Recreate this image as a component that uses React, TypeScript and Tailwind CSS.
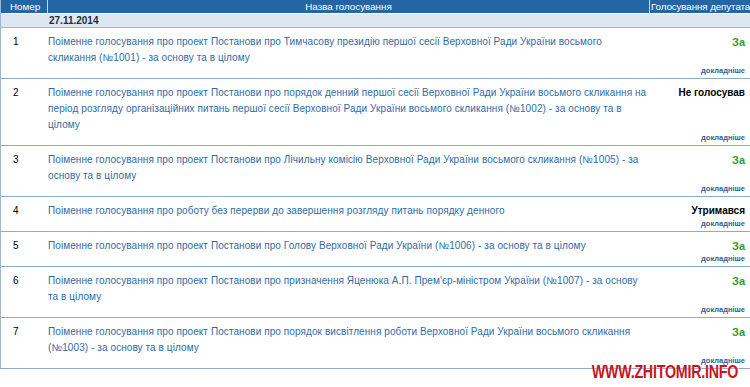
const votes = [
  {
    n: 1,
    title:
      'Поіменне голосування про проект Постанови про Тимчасову президію першої сесії Верховної Ради України восьмого скликання (№1001) - за основу та в цілому',
    vote: 'За',
  },
  {
    n: 2,
    title:
      'Поіменне голосування про проект Постанови про порядок денний першої сесії Верховної Ради України восьмого скликання на період розгляду організаційних питань першої сесії Верховної Ради України восьмого скликання (№1002) - за основу та в цілому',
    vote: 'Не голосував',
  },
  {
    n: 3,
    title:
      'Поіменне голосування про проект Постанови про Лічильну комісію Верховної Ради України восьмого скликання (№1005) - за основу та в цілому',
    vote: 'За',
  },
  {
    n: 4,
    title: 'Поіменне голосування про роботу без перерви до завершення розгляду питань порядку денного',
    vote: 'Утримався',
  },
  {
    n: 5,
    title: 'Поіменне голосування про проект Постанови про Голову Верховної Ради України (№1006) - за основу та в цілому',
    vote: 'За',
  },
  {
    n: 6,
    title:
      "Поіменне голосування про проект Постанови про призначення Яценюка А.П. Прем'єр-міністром України (№1007) - за основу та в цілому",
    vote: 'За',
  },
  {
    n: 7,
    title:
      'Поіменне голосування про проект Постанови про порядок висвітлення роботи Верховної Ради України восьмого скликання (№1003) - за основу та в цілому',
    vote: 'За',
  },
]

export default function App() {
  return (
    <div className="relative w-[750px] h-[387px] overflow-hidden bg-white font-['Liberation_Sans',Arial,sans-serif] text-[10px] leading-[16px]">
      <div className="w-[760px] border-l border-[#9db7d1]">
        {/* header */}
        <div className="flex h-[13px] bg-[#2466a4] text-white text-[9.8px] leading-[13px] whitespace-nowrap">
          <div className="w-[47px] pl-[9px] border-r border-[#c8d8e8]">Номер</div>
          <div className="flex-1 text-center border-r border-[#c8d8e8]">Назва голосування</div>
          <div className="w-[110px] pl-[1px] tracking-[-0.1px]">Голосування депутата</div>
        </div>

        <div className="h-[15px] bg-[#dde7f1] border-t border-t-white border-b border-[#9db7d1] pl-[48px] font-bold text-[10px] text-[#1f2f40] leading-[13px]">
          27.11.2014
        </div>

        {votes.map((v) => (
          <div key={v.n} className="flex border-b border-[#8eaacb]">
            <div className="w-[47px] pl-[12px] pt-[6px] text-black">{v.n}</div>
            <div className="flex-1 pt-[6px] pb-[12px] pr-[1px] tracking-[0.08px] text-[#2f6ba6]">{v.title}</div>
            <div className="w-[110px] pr-[15px] pt-[6px] pb-[3px] flex flex-col justify-between items-end">
              <span
                className={
                  v.vote === 'За' ? 'font-bold text-[11px] text-[#2f9a2f]' : 'font-bold text-[10px] text-black'
                }
              >
                {v.vote}
              </span>
              <span className="text-[7.5px] leading-[9px] font-bold text-[#2f5f90]">докладніше</span>
            </div>
          </div>
        ))}
      </div>

      {/* watermark */}
      <div className="absolute right-[12px] bottom-[6px] origin-right scale-x-75 whitespace-nowrap font-['Liberation_Sans',sans-serif] font-bold text-[19px] leading-[18px] text-[#c8141e] tracking-[-0.3px] [text-shadow:0_0_2px_white]">
        WWW.ZHITOMIR.INFO
      </div>
    </div>
  )
}
